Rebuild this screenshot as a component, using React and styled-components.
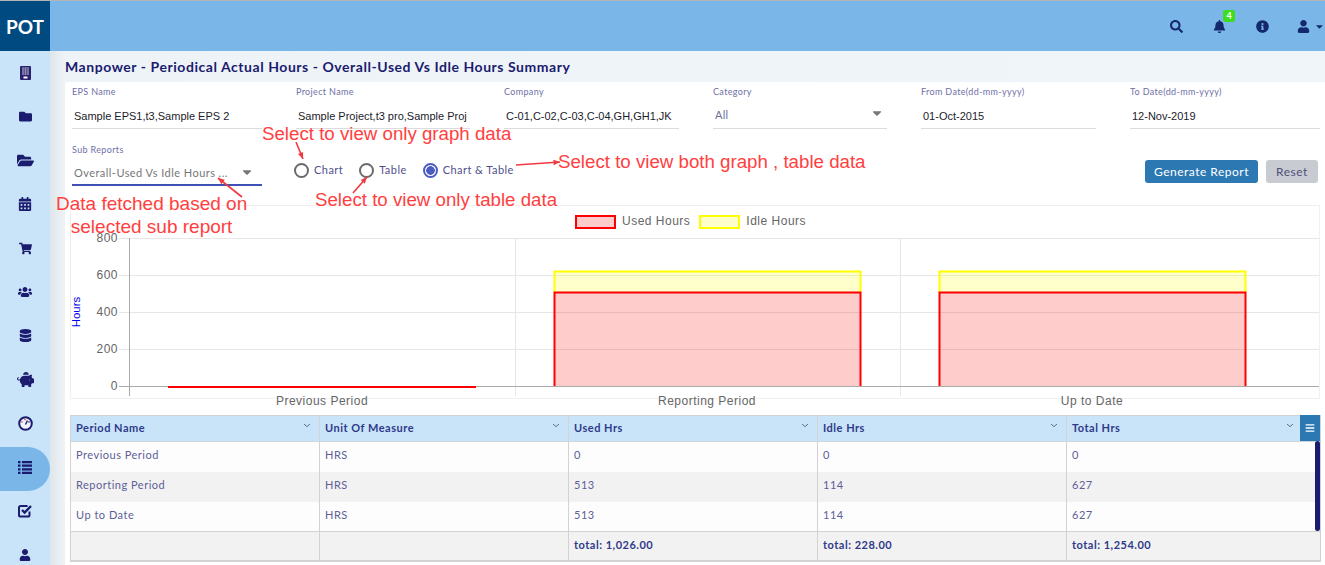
import React from "react";
import styled, { createGlobalStyle } from "styled-components";
import {
  FaSearch, FaBell, FaInfoCircle, FaUser, FaFolder, FaFolderOpen, FaCalendarAlt,
  FaShoppingCart, FaUsers, FaDatabase, FaPiggyBank, FaCaretDown, FaBars,
} from "react-icons/fa";

const navy = "#1b1b6f";

const GlobalStyle = createGlobalStyle`
  html, body { margin: 0; padding: 0; height: 565px; overflow: hidden; background: #fff; }
  * { box-sizing: border-box; }
  body { font-family: Lato, "Liberation Sans", sans-serif; }
`;

const Shell = styled.div`
  position: relative;
  display: flex;
  width: 1325px;
  height: 565px;
  overflow: hidden;
  border-top: 1px solid #b4b4b4;
`;

const Sidebar = styled.nav`
  flex: 0 0 50px;
  background: #c9e4f9;
  display: flex;
  flex-direction: column;
`;

const Logo = styled.div`
  flex: 0 0 50px;
  background: #004a82;
  color: #fff;
  font-weight: 700;
  font-size: 19px;
  display: flex;
  align-items: center;
  justify-content: center;
`;

const NavItem = styled.div`
  position: relative;
  flex: 0 0 43.8px;
  display: flex;
  align-items: center;
  justify-content: center;
  color: ${navy};
  font-size: 13px;
  svg { position: relative; }
  ${props => props.$active && `
    &::before {
      content: "";
      position: absolute;
      left: 0;
      top: 2px;
      width: 50px;
      height: 44px;
      background: #7ab7e8;
      border-radius: 0 22px 22px 0;
    }
  `}
`;

const Main = styled.div`
  flex: 1;
  display: flex;
  flex-direction: column;
  min-width: 0;
`;

const Header = styled.header`
  flex: 0 0 50px;
  background: #7ab7e8;
  display: flex;
  align-items: center;
  justify-content: flex-end;
  color: #14286e;
`;

const HeaderIcon = styled.div`
  position: relative;
  width: 43px;
  display: flex;
  justify-content: center;
  font-size: 13px;
`;

const UserMenu = styled.div`
  display: flex;
  align-items: center;
  gap: 4px;
  width: 41.5px;
  padding-left: 13px;
  font-size: 13px;
  flex-shrink: 0;
  svg + svg { font-size: 11px; flex-shrink: 0; }
`;

const Badge = styled.span`
  position: absolute;
  left: 25.5px;
  top: -10px;
  width: 12px;
  height: 12px;
  border-radius: 2px;
  background: #3fdc20;
  color: #fff;
  font-size: 9px;
  font-weight: 700;
  line-height: 12px;
  text-align: center;
`;

const Content = styled.div`
  flex: 1;
  display: flex;
  background: linear-gradient(90deg, #dfe6ea 0, #eef3f7 15px, #f0f5f9 100%);
  padding-left: 15px;
  min-height: 0;
`;

const Page = styled.div`
  flex: 1;
  display: flex;
  flex-direction: column;
  min-width: 0;
`;

const Title = styled.h1`
  margin: 0;
  height: 31px;
  line-height: 32px;
  font-size: 14px;
  font-weight: 700;
  letter-spacing: 0.55px;
  color: ${navy};
`;

const Panel = styled.section`
  flex: 1;
  background: #fff;
  border-radius: 3px 0 0 0;
  padding: 0 6px 0 5px;
`;

const FormRow = styled.div`
  display: grid;
  grid-template-columns: 190px 174px 175px 174px 175px 190px;
  column-gap: 34px;
  margin-left: 2px;
  height: 47px;
`;

const Field = styled.div`
  display: flex;
  flex-direction: column;
  min-width: 0;
`;

const Label = styled.label`
  height: 19px;
  line-height: 19px;
  font-size: 9px;
  letter-spacing: 0.35px;
  color: #6f6fa8;
`;

const Value = styled.div`
  height: 28px;
  padding: 3px 2px 0;
  line-height: 24px;
  font-family: "Liberation Sans", sans-serif;
  font-size: 11px;
  color: #1c1c2c;
  white-space: nowrap;
  overflow: hidden;
  border-bottom: 1px solid #dcdcdc;
`;

const SelectValue = styled.div`
  display: flex;
  align-items: center;
  justify-content: space-between;
  height: 28px;
  padding: 0 2px 1px;
  font-size: 11px;
  letter-spacing: 0.3px;
  color: #6c6c9c;
  border-bottom: 1px solid #dcdcdc;
  svg { color: #777; font-size: 14px; margin: -2px 1px 0 0; }
`;

const ControlsRow = styled.div`
  display: flex;
  align-items: flex-start;
  margin-left: 2px;
  height: 76px;
  padding-top: 11px;
`;

const SubReport = styled(Field)`
  width: 190px;
  margin-right: 32px;
`;

const SubReportValue = styled(SelectValue)`
  height: 27px;
  padding: 1px 2px 0;
  letter-spacing: 0.45px;
  color: #777;
  border-bottom: 2px solid #3f51b5;
  svg { margin: -1px 6px 0 0; }
`;

const RadioGroup = styled.div`
  display: flex;
  align-items: center;
  height: 20px;
  margin-top: 19px;
`;

const RadioItem = styled.div`
  display: flex;
  align-items: center;
  gap: 5px;
  margin-right: ${props => props.$gap}px;
  font-size: 11px;
  letter-spacing: 0.45px;
  color: #50508e;
`;

const RadioCircle = styled.span`
  width: 15px;
  height: 15px;
  margin-top: 2px;
  border-radius: 50%;
  border: 2px solid ${props => (props.$on ? "#4a5cc0" : "#6b6b6b")};
  background: ${props => (props.$on ? "radial-gradient(circle, #4a5cc0 0 4px, #fff 4.6px)" : "#fff")};
`;

const Actions = styled.div`
  margin-left: auto;
  display: flex;
  gap: 8px;
  margin-top: 20px;
  margin-right: 1px;
`;

const Button = styled.button`
  height: 23px;
  border: 0;
  border-radius: 3px;
  padding: 0;
  width: ${props => props.$width}px;
  font-family: Lato, sans-serif;
  font-size: 12px;
  letter-spacing: 0.5px;
  background: ${props => (props.$primary ? "#2b78b3" : "#c8ccd2")};
  color: ${props => (props.$primary ? "#fff" : "#50507a")};
`;

const ChartBox = styled.div`
  height: 194px;
  width: 1250px;
  border: 1px solid #f0f0f0;
  margin-bottom: 16px;
`;

const Legend = styled.div`
  display: flex;
  align-items: center;
  height: 24px;
  padding: 6px 0 0 504px;
  font-family: "Liberation Sans", sans-serif;
  font-size: 12px;
  letter-spacing: 0.5px;
  color: #666;
`;

const Swatch = styled.span`
  width: 41px;
  height: 14px;
  margin: 2px 6px 0 0;
  border: 2px solid ${props => props.$color};
  background: ${props => props.$fill};
`;

const LegendLabel = styled.span`
  margin-right: ${props => props.$gap}px;
`;

const ChartSvg = styled.svg`
  display: block;
  overflow: visible;
  text {
    font-family: "Liberation Sans", sans-serif;
    font-size: 12px;
    letter-spacing: 0.5px;
    fill: #666;
  }
  text.axis-title { font-size: 11.5px; letter-spacing: 0; fill: #0000ee; }
`;

const TableWrap = styled.div`
  position: relative;
  width: 1250px;
`;

const Table = styled.table`
  width: 100%;
  table-layout: fixed;
  border-collapse: collapse;
  font-size: 11px;
  letter-spacing: 0.5px;
  border: 1px solid #d2d2d2;
  border-bottom-width: 2px;
`;

const Th = styled.th`
  position: relative;
  height: 26px;
  padding: 0 5px 2px;
  text-align: left;
  font-weight: 700;
  color: #2f3a8a;
  background: #c9e4f9;
  border-right: 1px solid #cfd6da;
  border-bottom: 1px solid #cfd6da;
  svg { position: absolute; top: 7px; right: ${props => props.$chevron}px; }
`;

const Tr = styled.tr`
  background: ${props => (props.$odd ? "#f2f2f2" : "#fdfdfd")};
`;

const Td = styled.td`
  height: 30px;
  padding: 0 5px 4px;
  color: #5e5e98;
  border-right: 1px solid #d2d2d2;
`;

const TotalCell = styled.td`
  height: 29px;
  padding: 0 5px 2px;
  font-weight: 700;
  color: #2f3a8a;
  background: #f2f2f2;
  border-top: 1px solid #d2d2d2;
  border-right: 1px solid #d2d2d2;
`;

const MenuButton = styled.div`
  position: absolute;
  right: 0;
  top: 0;
  width: 20px;
  height: 26px;
  background: #2b78b3;
  color: #fff;
  display: flex;
  align-items: center;
  justify-content: center;
  font-size: 10px;
`;

const ScrollThumb = styled.div`
  position: absolute;
  right: 0;
  top: 26px;
  width: 5px;
  height: 90px;
  border-radius: 3px;
  background: ${navy};
`;

const Notes = styled.svg`
  position: absolute;
  left: 0;
  top: -1px;
  pointer-events: none;
`;

const Note = styled.div`
  position: absolute;
  left: ${props => props.$x}px;
  top: ${props => props.$y}px;
  font-family: "Liberation Sans", sans-serif;
  font-size: ${props => props.$size || 18.7}px;
  line-height: 23px;
  color: #ff4040;
  white-space: nowrap;
  text-align: center;
`;

// small drawings with no close match in the icon packages
const BuildingIcon = () => (
  <svg width="11" height="14" viewBox="0 0 11 14">
    <rect width="11" height="14" rx="1" fill="#2a2270" />
    <path d="M2 2h7M2 4h7M2 6h7M2 8h7M3 1.5v7.5M5.5 1.5v7.5M8 1.5v7.5" stroke="#8b8fb0" strokeWidth="1" />
    <rect x="3.5" y="10.5" width="4" height="2" fill="#fff" />
  </svg>
);

const GaugeIcon = () => (
  <svg width="15" height="15" viewBox="0 0 15 15">
    <circle cx="7.5" cy="7.5" r="6.3" fill="#eef4fa" stroke="#1b1b6f" strokeWidth="2" />
    <path d="M7.5 8.5L9.5 4.5" stroke="#1b1b6f" strokeWidth="1.4" />
    <circle cx="4" cy="6" r=".8" fill="#d04050" />
    <circle cx="7" cy="3.6" r=".8" fill="#d04050" />
    <circle cx="11" cy="6" r=".8" fill="#1b1b6f" />
  </svg>
);

const ListIcon = () => (
  <svg width="14" height="13" viewBox="0 0 14 13" fill="#1b1b6f">
    <path d="M0 0h2.5v2.2H0zM4 0h10v2.2H4zM0 3.6h2.5v2.2H0zM4 3.6h10v2.2H4zM0 7.2h2.5v2.2H0zM4 7.2h10v2.2H4zM0 10.8h2.5V13H0zM4 10.8h10V13H4z" />
  </svg>
);

const CheckIcon = () => (
  <svg width="14" height="14" viewBox="0 0 14 14" fill="none" stroke="#1b1b6f">
    <path d="M11.5 7.5V11a1.6 1.6 0 0 1-1.6 1.6H2.6A1.6 1.6 0 0 1 1 11V3.6A1.6 1.6 0 0 1 2.6 2h7" strokeWidth="2" />
    <path d="M4 6l2.6 2.6L13 2" strokeWidth="2.4" />
  </svg>
);

const SortChevron = () => (
  <svg width="8" height="5" viewBox="0 0 8 5" fill="none" stroke="#5d6c92" strokeWidth="1">
    <path d="M1 1l3 2.6L7 1" />
  </svg>
);

const Arrow = ({ from, to }) => {
  const angle = Math.atan2(to[1] - from[1], to[0] - from[0]);
  const wing = (d) => [to[0] - 7 * Math.cos(angle + d), to[1] - 7 * Math.sin(angle + d)].join(",");
  return (
    <g>
      <line x1={from[0]} y1={from[1]} x2={to[0]} y2={to[1]} stroke="#f03a42" strokeWidth="1.6" />
      <polygon points={`${to.join(",")} ${wing(0.4)} ${wing(-0.4)}`} fill="#f03a42" />
    </g>
  );
};

const navIcons = [
  <BuildingIcon />, <FaFolder />, <FaFolderOpen size={17} />, <FaCalendarAlt size={14} />,
  <FaShoppingCart size={13} />, <FaUsers size={14} />, <FaDatabase size={13} />, <FaPiggyBank size={17} />,
  <GaugeIcon />, <ListIcon />, <CheckIcon />, <FaUser size={12} />,
];

const fields = [
  { label: "EPS Name", value: "Sample EPS1,t3,Sample EPS 2" },
  { label: "Project Name", value: "Sample Project,t3 pro,Sample Proj" },
  { label: "Company", value: "C-01,C-02,C-03,C-04,GH,GH1,JK" },
  { label: "Category", value: "All", select: true },
  { label: "From Date(dd-mm-yyyy)", value: "01-Oct-2015" },
  { label: "To Date(dd-mm-yyyy)", value: "12-Nov-2019" },
];

const columns = [
  { name: "Period Name", width: 249, chevron: 8 },
  { name: "Unit Of Measure", width: 249, chevron: 8 },
  { name: "Used Hrs", width: 249, chevron: 8 },
  { name: "Idle Hrs", width: 249, chevron: 8 },
  { name: "Total Hrs", width: 254, chevron: 26 },
];

const rows = [
  ["Previous Period", "HRS", "0", "0", "0"],
  ["Reporting Period", "HRS", "513", "114", "627"],
  ["Up to Date", "HRS", "513", "114", "627"],
];

const totals = ["", "", "total: 1,026.00", "total: 228.00", "total: 1,254.00"];

// chart svg origin sits at page x 71, y 230
const yFor = (v) => 156 - v * 0.185;
const xLabels = [
  { name: "Previous Period", x: 251 },
  { name: "Reporting Period", x: 636 },
  { name: "Up to Date", x: 1021 },
];

const Chart = () => (
  <ChartSvg width="1248" height="169">
    {[800, 600, 400, 200].map((v) => (
      <line key={v} x1="48" x2="1248" y1={yFor(v) + 0.5} y2={yFor(v) + 0.5} stroke="#e6e6e6" />
    ))}
    {[800, 600, 400, 200, 0].map((v) => (
      <text key={v} x="47" y={yFor(v) + 4} textAnchor="end">{v}</text>
    ))}
    <line x1="58.5" x2="58.5" y1="8" y2="166" stroke="#a8a8a8" />
    <line x1="444.5" x2="444.5" y1="8" y2="166" stroke="#e6e6e6" />
    <line x1="829.5" x2="829.5" y1="8" y2="166" stroke="#e6e6e6" />
    <text className="axis-title" transform="translate(9 82) rotate(-90)" textAnchor="middle">Hours</text>
    {[483.5, 868.5].map((x) => (
      <g key={x}>
        <rect x={x} y="41.5" width="306" height="21" fill="rgba(255,255,0,.2)" />
        <path d={`M${x} 62.5V41.5h306V62.5`} fill="none" stroke="#ffff00" strokeWidth="2" />
        <rect x={x} y="62.5" width="306" height="94" fill="rgba(255,0,0,.2)" />
        <path d={`M${x} 156V62.5h306V156`} fill="none" stroke="#f00" strokeWidth="2" />
      </g>
    ))}
    <line x1="48" x2="1248" y1="156.5" y2="156.5" stroke="#aaa" />
    <line x1="97" x2="405" y1="157" y2="157" stroke="#f00" strokeWidth="2" />
    {xLabels.map((l) => (
      <text key={l.name} x={l.x} y="175" textAnchor="middle">{l.name}</text>
    ))}
  </ChartSvg>
);

const App = () => (
  <>
    <GlobalStyle />
    <Shell>
      <Sidebar>
        <Logo>POT</Logo>
        {navIcons.map((icon, i) => (
          <NavItem key={i} $active={i === 9}>{icon}</NavItem>
        ))}
      </Sidebar>
      <Main>
        <Header>
          <HeaderIcon><FaSearch /></HeaderIcon>
          <HeaderIcon><FaBell /><Badge>4</Badge></HeaderIcon>
          <HeaderIcon><FaInfoCircle /></HeaderIcon>
          <UserMenu><FaUser /><FaCaretDown /></UserMenu>
        </Header>
        <Content>
          <Page>
            <Title>Manpower - Periodical Actual Hours - Overall-Used Vs Idle Hours Summary</Title>
            <Panel>
              <FormRow>
                {fields.map((f) => (
                  <Field key={f.label}>
                    <Label>{f.label}</Label>
                    {f.select
                      ? <SelectValue>{f.value}<FaCaretDown /></SelectValue>
                      : <Value>{f.value}</Value>}
                  </Field>
                ))}
              </FormRow>
              <ControlsRow>
                <SubReport>
                  <Label>Sub Reports</Label>
                  <SubReportValue>Overall-Used Vs Idle Hours ...<FaCaretDown /></SubReportValue>
                </SubReport>
                <RadioGroup>
                  <RadioItem $gap={16}><RadioCircle />Chart</RadioItem>
                  <RadioItem $gap={16}><RadioCircle />Table</RadioItem>
                  <RadioItem><RadioCircle $on />Chart &amp; Table</RadioItem>
                </RadioGroup>
                <Actions>
                  <Button $primary $width={113}>Generate Report</Button>
                  <Button $width={52}>Reset</Button>
                </Actions>
              </ControlsRow>
              <ChartBox>
                <Legend>
                  <Swatch $color="#f00" $fill="rgba(255,0,0,.2)" />
                  <LegendLabel $gap={9}>Used Hours</LegendLabel>
                  <Swatch $color="#ffff00" $fill="rgba(255,255,0,.2)" />
                  <LegendLabel>Idle Hours</LegendLabel>
                </Legend>
                <Chart />
              </ChartBox>
              <TableWrap>
                <Table>
                  <colgroup>
                    {columns.map((c) => <col key={c.name} style={{ width: c.width }} />)}
                  </colgroup>
                  <thead>
                    <tr>
                      {columns.map((c) => (
                        <Th key={c.name} $chevron={c.chevron}>{c.name}<SortChevron /></Th>
                      ))}
                    </tr>
                  </thead>
                  <tbody>
                    {rows.map((r, i) => (
                      <Tr key={r[0]} $odd={i % 2 === 1}>
                        {r.map((cell, j) => <Td key={j}>{cell}</Td>)}
                      </Tr>
                    ))}
                    <tr>
                      {totals.map((t, j) => <TotalCell key={j}>{t}</TotalCell>)}
                    </tr>
                  </tbody>
                </Table>
                <MenuButton><FaBars /></MenuButton>
                <ScrollThumb />
              </TableWrap>
            </Panel>
          </Page>
        </Content>
      </Main>

      <Note $x={262} $y={121}>Select to view only graph data</Note>
      <Note $x={558} $y={149}>Select to view both graph , table data</Note>
      <Note $x={315} $y={187}>Select to view only table data</Note>
      <Note $x={56} $y={191} $size={19}>Data fetched based on<br />selected sub report</Note>
      <Notes width="1325" height="565">
        <Arrow from={[296, 142]} to={[303, 159]} />
        <Arrow from={[353, 193]} to={[367, 177]} />
        <Arrow from={[516, 165]} to={[560, 162]} />
        <Arrow from={[242, 197]} to={[218, 178]} />
      </Notes>
    </Shell>
  </>
);

export default App;
